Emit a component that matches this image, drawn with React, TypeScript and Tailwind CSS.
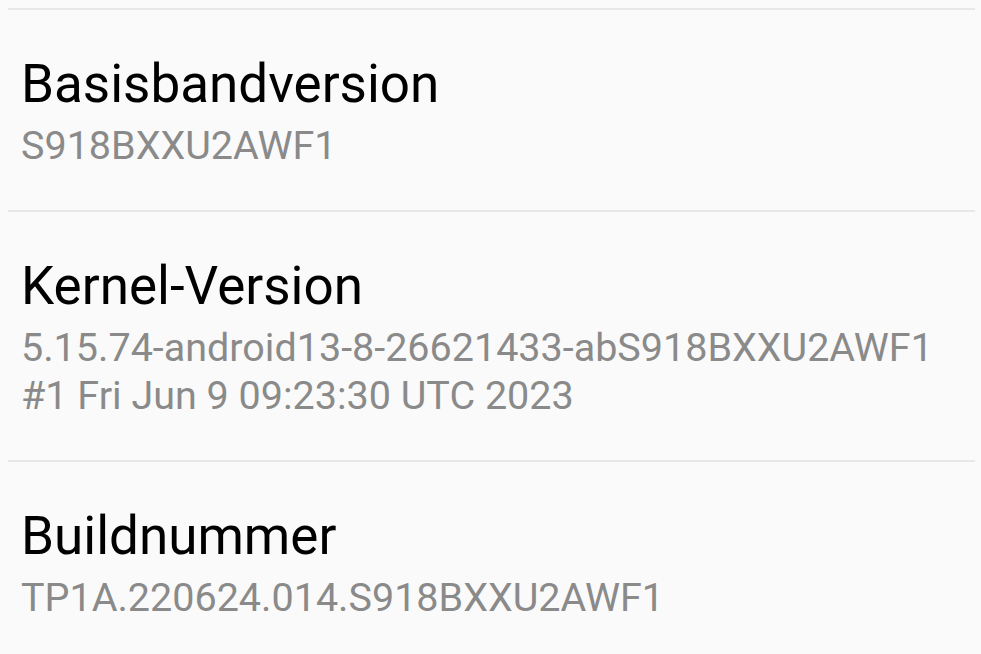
const items = [
  { title: "Basisbandversion", lines: ["S918BXXU2AWF1"] },
  {
    title: "Kernel-Version",
    lines: ["5.15.74-android13-8-26621433-abS918BXXU2AWF1", "#1 Fri Jun 9 09:23:30 UTC 2023"],
  },
  { title: "Buildnummer", lines: ["TP1A.220624.014.S918BXXU2AWF1"] },
]

export default function App() {
  return (
    <div className="h-[654px] w-[981px] overflow-hidden bg-[#fafafa] pt-2 font-['Roboto',sans-serif]">
      {items.map((item) => (
        <div key={item.title}>
          <div className="ml-2 mr-[6px] h-[2px] bg-[#e8e8e8]" />
          <div className="pl-[21px] pt-[44px] pb-[40px]">
            <div className="whitespace-nowrap text-[53px] leading-[60px] text-black">{item.title}</div>
            <div className="mt-[8px] whitespace-nowrap text-[39.5px] leading-[48px] text-[#8a8a8a]">
              {item.lines.map((l) => (
                <div key={l}>{l}</div>
              ))}
            </div>
          </div>
        </div>
      ))}
    </div>
  )
}
